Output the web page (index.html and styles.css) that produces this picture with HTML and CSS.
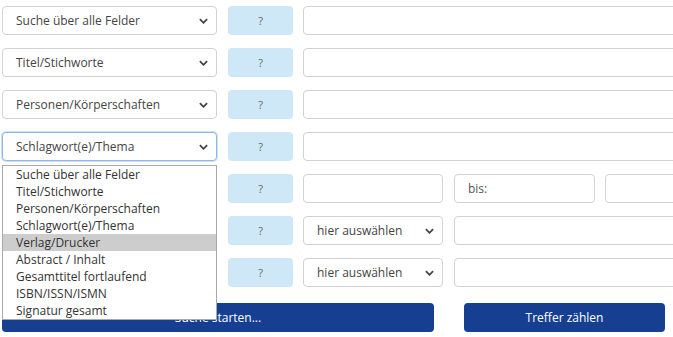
FILE: index.html
```html
<!DOCTYPE html>
<html lang="de">

<head>
  <meta charset="UTF-8">
  <meta name="viewport" content="width=device-width, initial-scale=1.0">
  <title>Erweiterte Suche</title>
  <link rel="stylesheet" href="styles.css">
</head>

<body>

  <form class="search-form">
    <!-- Suchzeilen -->
    <div class="row">
      <div class="select field-select"><span>Suche über alle Felder</span><svg viewBox="0 0 10 6"><path d="M1 1l4 4 4-4"/></svg></div>
      <button type="button" class="help">?</button>
      <input type="text" class="term">
    </div>

    <div class="row">
      <div class="select field-select"><span>Titel/Stichworte</span><svg viewBox="0 0 10 6"><path d="M1 1l4 4 4-4"/></svg></div>
      <button type="button" class="help">?</button>
      <input type="text" class="term">
    </div>

    <div class="row">
      <div class="select field-select"><span>Personen/Körperschaften</span><svg viewBox="0 0 10 6"><path d="M1 1l4 4 4-4"/></svg></div>
      <button type="button" class="help">?</button>
      <input type="text" class="term">
    </div>

    <div class="row">
      <div class="select field-select focused"><span>Schlagwort(e)/Thema</span><svg viewBox="0 0 10 6"><path d="M1 1l4 4 4-4"/></svg>
        <!-- geöffnete Auswahlliste -->
        <ul class="dropdown">
          <li>Suche über alle Felder</li>
          <li>Titel/Stichworte</li>
          <li>Personen/Körperschaften</li>
          <li>Schlagwort(e)/Thema</li>
          <li class="hover">Verlag/Drucker</li>
          <li>Abstract / Inhalt</li>
          <li>Gesamttitel fortlaufend</li>
          <li>ISBN/ISSN/ISMN</li>
          <li>Signatur gesamt</li>
        </ul>
      </div>
      <button type="button" class="help">?</button>
      <input type="text" class="term">
    </div>

    <!-- Jahr, von der Liste verdeckt -->
    <div class="row">
      <div class="select field-select"></div>
      <button type="button" class="help">?</button>
      <input type="text" class="small">
      <input type="text" class="small" placeholder="bis:">
      <input type="text" class="term">
    </div>

    <div class="row">
      <div class="select field-select"></div>
      <button type="button" class="help">?</button>
      <div class="select small"><span>hier auswählen</span><svg viewBox="0 0 10 6"><path d="M1 1l4 4 4-4"/></svg></div>
      <input type="text" class="term">
    </div>

    <div class="row">
      <div class="select field-select"></div>
      <button type="button" class="help">?</button>
      <div class="select small"><span>hier auswählen</span><svg viewBox="0 0 10 6"><path d="M1 1l4 4 4-4"/></svg></div>
      <input type="text" class="term">
    </div>

    <div class="actions">
      <button type="button" class="btn btn-start">Suche starten...</button>
      <button type="button" class="btn btn-count">Treffer zählen</button>
    </div>
  </form>

</body>

</html>
```

FILE: styles.css
```css
body {
  margin: 0;
  font-family: "Open Sans", Arial, sans-serif;
  font-size: 12px;
  color: #444;
  background-color: #fff;
  overflow: hidden;
}

.search-form {
  width: 760px;
  padding: 6px 0 0 2px;
}

.row {
  display: flex;
  height: 29px;
  margin-bottom: 13px;
}

.row > * {
  flex-shrink: 0;
}

.select,
input {
  box-sizing: border-box;
  height: 29px;
  border: 1px solid #d2d2d2;
  border-radius: 4px;
  background-color: #fff;
  font-family: inherit;
  font-size: 12px;
  color: #444;
}

.select {
  position: relative;
  display: flex;
  align-items: center;
  justify-content: space-between;
  padding: 0 8px 0 13px;
}

.select svg {
  width: 9px;
  height: 6px;
  fill: none;
  stroke: #444;
  stroke-width: 2;
}

.field-select {
  width: 215px;
}

.focused {
  border-color: #8ab8ea;
  box-shadow: 0 0 0 1px #cfe2f6;
}

.help {
  width: 65px;
  height: 29px;
  margin: 0 10px 0 11px;
  border: none;
  border-radius: 4px;
  background-color: #cfe8f7;
  color: #666;
  font-family: inherit;
  font-size: 11px;
  padding: 0;
}

input {
  padding: 0 13px;
}

input::placeholder {
  color: #555;
}

.row .term {
  flex: 1 1 auto;
  min-width: 0;
}

.small {
  width: 140px;
  margin-right: 11px;
}

.row input.small + input.small {
  width: 141px;
  margin-right: 10px;
}

/* geöffnete Liste */
.dropdown {
  position: absolute;
  top: 32px;
  left: -1px;
  z-index: 5;
  width: 215px;
  box-sizing: border-box;
  margin: 0;
  padding: 0;
  list-style: none;
  border: 1px solid #a9a9a9;
  background-color: #fff;
  color: #333;
}

.dropdown li {
  height: 17px;
  line-height: 17px;
  padding-left: 13px;
}

.dropdown li.hover {
  background-color: #cdcdcd;
}

.actions {
  display: flex;
  margin-top: 16px;
}

.btn {
  height: 29px;
  border: none;
  border-radius: 4px;
  background-color: #163f92;
  color: #fff;
  font-family: inherit;
  font-size: 12px;
  cursor: pointer;
}

.btn-start {
  width: 432px;
}

.btn-count {
  width: 201px;
  margin-left: 30px;
}
```
